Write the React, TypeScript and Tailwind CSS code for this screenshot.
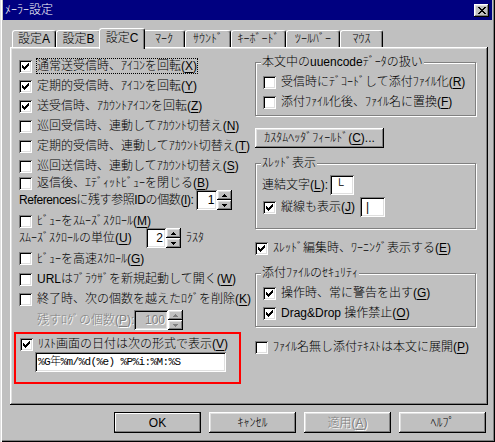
import type { ReactNode } from "react";

const raised =
  "shadow-[inset_-1px_-1px_0_#000,inset_1px_1px_0_#fff,inset_-2px_-2px_0_#808080,inset_2px_2px_0_#dfdfdf]";
const sunken =
  "shadow-[inset_1px_1px_0_#808080,inset_-1px_-1px_0_#fff,inset_2px_2px_0_#000,inset_-2px_-2px_0_#dfdfdf]";
const etched = "text-[#808080] [text-shadow:1px_1px_0_#fff]";

const tabs = [
  { label: "設定A", w: "w-[44px]" },
  { label: "設定B", w: "w-[45px]" },
  { label: "設定C", w: "w-[46px]", active: true },
  { label: "ﾏｰｸ", w: "w-[42px]" },
  { label: "ｻｳﾝﾄﾞ", w: "w-[46px]" },
  { label: "ｷｰﾎﾞｰﾄﾞ", w: "w-[55px]" },
  { label: "ﾂｰﾙﾊﾞｰ", w: "w-[54px]" },
  { label: "ﾏｳｽ", w: "w-[43px]" },
];

// label text with the underlined access key in brackets
const Key = ({ text, k, tail = "" }: { text: string; k: string; tail?: string }) => (
  <span className="whitespace-nowrap">
    {text}(<span className="underline underline-offset-[2px]">{k}</span>){tail}
  </span>
);

const Box = ({ checked = false }: { checked?: boolean }) => (
  <span className={`flex h-[13px] w-[13px] shrink-0 items-center justify-center bg-white ${sunken}`}>
    {checked && (
      <svg width="7" height="7" viewBox="0 0 7 7" shapeRendering="crispEdges">
        <path
          d="M0 2h1v3H0zM1 3h1v3H1zM2 4h1v3H2zM3 3h1v3H3zM4 2h1v3H4zM5 1h1v3H5zM6 0h1v3H6z"
          fill="#000"
        />
      </svg>
    )}
  </span>
);

const Check = ({
  checked = false,
  className = "",
  children,
}: {
  checked?: boolean;
  className?: string;
  children: ReactNode;
}) => (
  <div className={`flex items-center gap-[5px] ${className}`}>
    <Box checked={checked} />
    {children}
  </div>
);

const Arrow = ({ up = false, disabled = false }: { up?: boolean; disabled?: boolean }) => (
  <div className={`flex h-[10px] w-[15px] items-center justify-center ${raised}`}>
    <svg width="5" height="3" viewBox="0 0 5 3" shapeRendering="crispEdges">
      <path
        d={up ? "M2 0h1v1H2zM1 1h3v1H1zM0 2h5v1H0z" : "M0 0h5v1H0zM1 1h3v1H1zM2 2h1v1H2z"}
        fill={disabled ? "#808080" : "#000"}
      />
    </svg>
  </div>
);

const Spin = ({ value, w, disabled = false }: { value: string; w: string; disabled?: boolean }) => (
  <div className="flex h-[20px] shrink-0">
    <div
      className={`flex items-center justify-end pr-[3px] ${sunken} ${w} ${
        disabled ? `bg-[#c0c0c0] ${etched}` : "bg-white"
      }`}
    >
      {value}
    </div>
    <div className="flex flex-col">
      <Arrow up disabled={disabled} />
      <Arrow disabled={disabled} />
    </div>
  </div>
);

const Group = ({
  title,
  className = "",
  children,
}: {
  title: string;
  className?: string;
  children: ReactNode;
}) => (
  <div className={`relative border border-[#808080] shadow-[1px_1px_0_#fff,inset_1px_1px_0_#fff] ${className}`}>
    <span className="absolute -top-[8px] left-[5px] whitespace-nowrap bg-[#c0c0c0] px-[1px] leading-[14px]">
      {title}
    </span>
    {children}
  </div>
);

const Button = ({ children, primary = false }: { children: ReactNode; primary?: boolean }) => (
  <div
    className={`flex h-[21px] w-[87px] items-center justify-center ${
      primary ? "border border-black shadow-[inset_-1px_-1px_0_#808080,inset_1px_1px_0_#fff]" : raised
    }`}
  >
    {children}
  </div>
);

export default function App() {
  return (
    <div className="flex h-[442px] w-[495px] flex-col bg-[#c0c0c0] px-[3px] font-['Liberation_Sans','Noto_Sans_CJK_JP',sans-serif] text-[12px] leading-[14px] font-light text-black shadow-[inset_1px_0_0_#dfdfdf,inset_2px_0_0_#fff,inset_-1px_-1px_0_#000,inset_-2px_-2px_0_#808080]">
      {/* title bar */}
      <div className="flex h-[20px] items-center justify-between bg-[#000080] pl-[2px] pr-[3px] text-white">
        <span>ﾒｰﾗｰ設定</span>
        <div className={`flex h-[13px] w-[15px] items-center justify-center bg-[#c0c0c0] ${raised}`}>
          <svg width="8" height="7" viewBox="0 0 8 7" shapeRendering="crispEdges">
            <path
              d="M0 0h2v1H0zM6 0h2v1H6zM1 1h2v1H1zM5 1h2v1H5zM2 2h4v1H2zM3 3h2v1H3zM2 4h4v1H2zM1 5h2v1H1zM5 5h2v1H5zM0 6h2v1H0zM6 6h2v1H6z"
              fill="#000"
            />
          </svg>
        </div>
      </div>

      {/* tabs */}
      <div className="mt-[8px] flex h-[19px] items-end pl-[9px]">
        {tabs.map((t) =>
          t.active ? (
            <div
              key={t.label}
              className={`relative z-10 -mx-[2px] -mb-[2px] flex h-[21px] items-center justify-center rounded-t-[3px] border-l border-t border-r border-l-white border-t-white border-r-black bg-[#c0c0c0] pb-[3px] shadow-[inset_-1px_0_0_#808080] ${t.w}`}
            >
              {t.label}
            </div>
          ) : (
            <div
              key={t.label}
              className={`flex h-[17px] items-center justify-center rounded-t-[3px] border-l border-t border-r border-l-white border-t-white border-r-black shadow-[inset_-1px_0_0_#808080] ${t.w}`}
            >
              {t.label}
            </div>
          ),
        )}
      </div>

      {/* tab panel */}
      <div className={`ml-[7px] flex h-[358px] w-[478px] pl-[4px] pt-[9px] ${raised}`}>
        <div className="flex w-[227px] flex-col">
          <Check checked className="h-[20px] pl-[5px]">
            <span className="outline-1 outline-dotted outline-black">
              <Key text="通常送受信時、ｱｲｺﾝを回転" k="X" />
            </span>
          </Check>
          <Check checked className="h-[20px] pl-[5px]">
            <Key text="定期的受信時、ｱｲｺﾝを回転" k="Y" />
          </Check>
          <Check checked className="h-[20px] pl-[5px]">
            <Key text="送受信時、ｱｶｳﾝﾄｱｲｺﾝを回転" k="Z" />
          </Check>
          <Check className="h-[20px] pl-[5px]">
            <Key text="巡回受信時、連動してｱｶｳﾝﾄ切替え" k="N" />
          </Check>
          <Check className="h-[20px] pl-[5px]">
            <Key text="定期的受信時、連動してｱｶｳﾝﾄ切替え" k="T" />
          </Check>
          <Check className="h-[20px] pl-[5px]">
            <Key text="巡回送信時、連動してｱｶｳﾝﾄ切替え" k="S" />
          </Check>
          <Check className="h-[14px] pl-[5px]">
            <Key text="返信後、ｴﾃﾞｨｯﾄﾋﾞｭｰを閉じる" k="B" />
          </Check>
          <div className="flex h-[20px] items-center gap-[3px] pl-[5px]">
            <span className="whitespace-nowrap tracking-[-0.4px]">
              <Key text="Referencesに残す参照IDの個数" k="I" tail=":" />
            </span>
            <Spin value="1" w="w-[21px]" />
          </div>
          <Check className="h-[18px] pl-[5px] pt-[4px]">
            <Key text="ﾋﾞｭｰをｽﾑｰｽﾞｽｸﾛｰﾙ" k="M" />
          </Check>
          <div className="flex h-[20px] items-center pl-[5px]">
            <span className="w-[127px]">
              <Key text="ｽﾑｰｽﾞｽｸﾛｰﾙの単位" k="U" />
            </span>
            <Spin value="2" w="w-[20px]" />
            <span className="ml-[5px]">ﾗｽﾀ</span>
          </div>
          <Check className="h-[21px] pl-[5px]">
            <Key text="ﾋﾞｭｰを高速ｽｸﾛｰﾙ" k="G" />
          </Check>
          <Check className="h-[20px] pl-[5px]">
            <Key text="URLはﾌﾞﾗｳｻﾞを新規起動して開く" k="W" />
          </Check>
          <Check className="h-[20px] pl-[5px]">
            <Key text="終了時、次の個数を越えたﾛｸﾞを削除" k="K" />
          </Check>
          <div className="flex h-[22px] items-center pl-[23px]">
            <span className={`w-[97px] ${etched}`}>
              <Key text="残すﾛｸﾞの個数" k="P" tail=":" />
            </span>
            <Spin value="100" w="w-[34px]" disabled />
          </div>

          <div className="mt-[1px] flex h-[52px] flex-col border-2 border-[#ff0000] pl-[4px] pt-[3px]">
            <Check checked className="h-[14px]">
              <Key text="ﾘｽﾄ画面の日付は次の形式で表示" k="V" />
            </Check>
            <div
              className={`ml-[15px] mt-[1px] flex h-[20px] w-[191px] items-center whitespace-nowrap bg-white pl-[3px] font-['Liberation_Mono','Noto_Sans_CJK_JP',monospace] text-[11px] tracking-[-0.6px] ${sunken}`}
            >
              %G年%m/%d(%e) %P%i:%M:%S
            </div>
          </div>
        </div>

        <div className="ml-[14px] mt-[6px] flex w-[221px] flex-col">
          <Group title="本文中のuuencodeﾃﾞｰﾀの扱い" className="h-[54px] pl-[7px] pt-[9px]">
            <Check className="h-[20px]">
              <Key text="受信時にﾃﾞｺｰﾄﾞして添付ﾌｧｲﾙ化" k="R" />
            </Check>
            <Check className="h-[20px]">
              <Key text="添付ﾌｧｲﾙ化後、ﾌｧｲﾙ名に置換" k="F" />
            </Check>
          </Group>

          <div className={`mt-[12px] flex h-[20px] w-[129px] items-center justify-center ${raised}`}>
            <Key text="ｶｽﾀﾑﾍｯﾀﾞﾌｨｰﾙﾄﾞ" k="C" tail="..." />
          </div>

          <Group title="ｽﾚｯﾄﾞ表示" className="mt-[15px] h-[66px] pl-[6px] pt-[11px]">
            <div className="flex h-[20px] items-center">
              <span className="w-[68px]">
                <Key text="連結文字" k="L" tail=":" />
              </span>
              <div className={`flex h-[20px] w-[24px] items-center bg-white pl-[5px] ${sunken}`}>└</div>
            </div>
            <div className="mt-[2px] flex h-[20px] items-center pl-[1px]">
              <Check checked>
                <span className="w-[79px]">
                  <Key text="縦線も表示" k="J" />
                </span>
              </Check>
              <div className={`flex h-[20px] w-[25px] items-center bg-white pl-[6px] ${sunken}`}>|</div>
            </div>
          </Group>

          <Check checked className="mt-[9px] h-[20px]">
            <Key text="ｽﾚｯﾄﾞ編集時、ﾜｰﾆﾝｸﾞ表示する" k="E" />
          </Check>

          <Group title="添付ﾌｧｲﾙのｾｷｭﾘﾃｨ" className="mt-[15px] h-[54px] pl-[7px] pt-[9px]">
            <Check checked className="h-[20px]">
              <Key text="操作時、常に警告を出す" k="G" />
            </Check>
            <Check checked className="h-[20px]">
              <Key text="Drag&Drop 操作禁止" k="O" />
            </Check>
          </Group>

          <Check className="mt-[10px] h-[20px]">
            <Key text="ﾌｧｲﾙ名無し添付ﾃｷｽﾄは本文に展開" k="P" />
          </Check>
        </div>
      </div>

      {/* dialog buttons */}
      <div className="mt-[7px] flex justify-end gap-[8px] pr-[6px]">
        <Button primary>OK</Button>
        <Button>ｷｬﾝｾﾙ</Button>
        <Button>
          <span className={etched}>
            <Key text="適用" k="A" />
          </span>
        </Button>
        <Button>ﾍﾙﾌﾟ</Button>
      </div>
    </div>
  );
}
